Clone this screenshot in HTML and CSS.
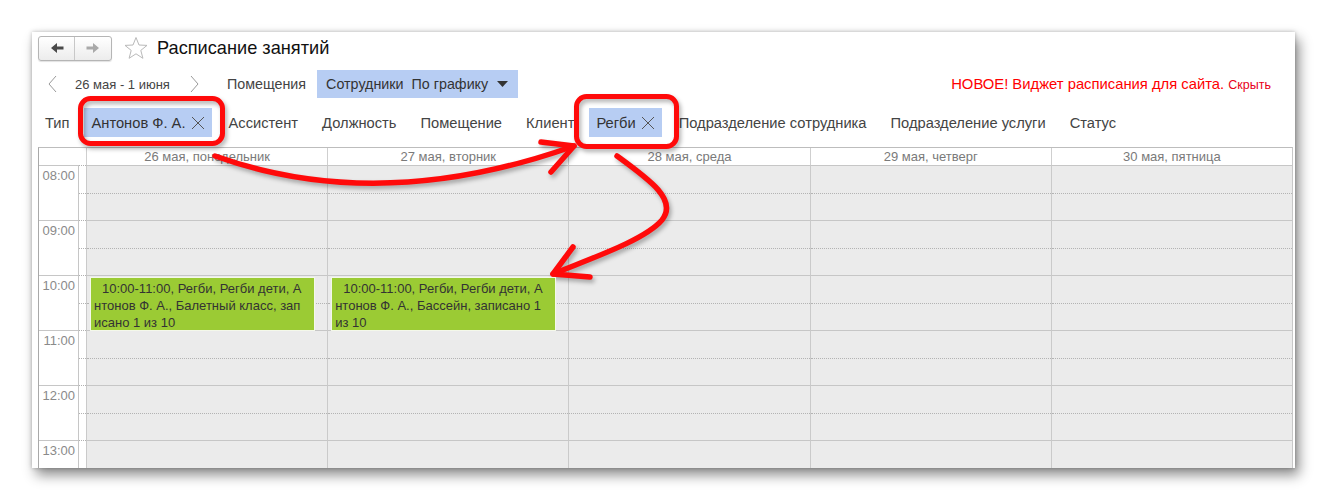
FILE: index.html
```html
<!DOCTYPE html>
<html lang="ru">
<head>
    <meta charset="UTF-8">
    <title>Расписание занятий</title>
    <link rel="stylesheet" href="styles.css">
</head>
<body>
    <div class="window">
        <div class="titlebar">
            <div class="nav">
                <button class="nav-btn back">
                    <svg width="14" height="12" viewBox="0 0 14 12"><path d="M1 6 L7 1 L7 4.5 L13.5 4.5 L13.5 7.5 L7 7.5 L7 11 Z"/></svg>
                </button>
                <button class="nav-btn fwd">
                    <svg width="14" height="12" viewBox="0 0 14 12"><path d="M13 6 L7 1 L7 4.5 L0.5 4.5 L0.5 7.5 L7 7.5 L7 11 Z"/></svg>
                </button>
            </div>
            <svg class="star" width="26" height="24" viewBox="0 0 26 24"><polygon points="13,1.5 16,9 24,9.4 17.8,14.4 19.9,22.3 13,17.8 6.1,22.3 8.2,14.4 2,9.4 10,9"/></svg>
            <h1 class="title">Расписание занятий</h1>
        </div>

        <div class="toolbar">
            <svg class="chev" width="12" height="18" viewBox="0 0 12 18"><path d="M9 1 L2 9 L9 17"/></svg>
            <span class="period">26 мая - 1 июня</span>
            <svg class="chev next" width="12" height="18" viewBox="0 0 12 18"><path d="M3 1 L10 9 L3 17"/></svg>
            <span class="tab">Помещения</span>
            <div class="tab tab-active">
                <span>Сотрудники</span>
                <span>По графику</span>
                <svg class="caret" width="11" height="6" viewBox="0 0 11 6"><path d="M0 0 L11 0 L5.5 6 Z"/></svg>
            </div>
            <div class="notice">НОВОЕ! Виджет расписания для сайта. <a href="#" class="hide-link">Скрыть</a></div>
        </div>

        <div class="filters">
            <span class="filter">Тип</span>
            <span class="chip">Антонов Ф. А.
                <svg width="14" height="14" viewBox="0 0 14 14"><path d="M1 1 L13 13 M13 1 L1 13"/></svg>
            </span>
            <span class="filter">Ассистент</span>
            <span class="filter">Должность</span>
            <span class="filter">Помещение</span>
            <span class="filter">Клиент</span>
            <span class="chip">Регби
                <svg width="14" height="14" viewBox="0 0 14 14"><path d="M1 1 L13 13 M13 1 L1 13"/></svg>
            </span>
            <span class="filter">Подразделение сотрудника</span>
            <span class="filter">Подразделение услуги</span>
            <span class="filter">Статус</span>
        </div>

        <div class="calendar">
            <div class="cal-head">
                <div class="corner"></div>
                <div class="day-title">26 мая, понедельник</div>
                <div class="day-title">27 мая, вторник</div>
                <div class="day-title">28 мая, среда</div>
                <div class="day-title">29 мая, четверг</div>
                <div class="day-title">30 мая, пятница</div>
            </div>
            <div class="cal-body">
                <div class="hour-row">
                    <div class="time">08:00</div><div class="strip"></div>
                    <div class="day"></div><div class="day"></div><div class="day"></div><div class="day"></div><div class="day"></div>
                </div>
                <div class="hour-row">
                    <div class="time">09:00</div><div class="strip"></div>
                    <div class="day"></div><div class="day"></div><div class="day"></div><div class="day"></div><div class="day"></div>
                </div>
                <div class="hour-row">
                    <div class="time">10:00</div><div class="strip"></div>
                    <div class="day">
                        <div class="event">10:00-11:00, Регби, Регби дети, Антонов Ф. А., Балетный класс, записано 1 из 10</div>
                    </div>
                    <div class="day">
                        <div class="event">10:00-11:00, Регби, Регби дети, Антонов Ф. А., Бассейн, записано 1 из 10</div>
                    </div>
                    <div class="day"></div><div class="day"></div><div class="day"></div>
                </div>
                <div class="hour-row">
                    <div class="time">11:00</div><div class="strip"></div>
                    <div class="day"></div><div class="day"></div><div class="day"></div><div class="day"></div><div class="day"></div>
                </div>
                <div class="hour-row">
                    <div class="time">12:00</div><div class="strip"></div>
                    <div class="day"></div><div class="day"></div><div class="day"></div><div class="day"></div><div class="day"></div>
                </div>
                <div class="hour-row">
                    <div class="time">13:00</div><div class="strip"></div>
                    <div class="day"></div><div class="day"></div><div class="day"></div><div class="day"></div><div class="day"></div>
                </div>
            </div>
        </div>
    </div>

    <!-- red annotation marks drawn over the screenshot -->
    <svg class="marks" width="1327" height="501" viewBox="0 0 1327 501">
        <rect x="80.5" y="98.5" width="142" height="45" rx="10"/>
        <rect x="576.5" y="96.5" width="100" height="50" rx="10"/>
        <path d="M215 156 Q380 215 574 146"/>
        <path d="M541 142 L574 146 L551 172"/>
        <path d="M617 156 C650 180 678 200 662 220 C645 240 592 258 553 274"/>
        <path d="M573 247 L553 274 L590 277"/>
    </svg>
</body>
</html>
```

FILE: styles.css
```css
* {
    margin: 0;
    padding: 0;
    box-sizing: border-box;
}

body {
    background: #fff;
    font-family: "Liberation Sans", Arial, sans-serif;
    color: #333;
    position: relative;
    width: 1327px;
    height: 501px;
    overflow: hidden;
}

.window {
    margin: 32px 0 0 32px;
    width: 1263px;
    height: 436px;
    background: #fff;
    box-shadow: 0 0 4px rgba(0, 0, 0, 0.25), 4px 7px 12px rgba(0, 0, 0, 0.45);
    overflow: hidden;
}

/* title bar */
.titlebar {
    display: flex;
    align-items: center;
    height: 29px;
    padding: 3px 6px 0;
}

.nav {
    display: flex;
    height: 25px;
    border: 1px solid #b5b5b5;
    border-radius: 3px;
    background: linear-gradient(#fff, #ececec);
    box-shadow: 0 1px 1px rgba(0, 0, 0, 0.12);
}

.nav-btn {
    width: 36px;
    border: 0;
    background: transparent;
    display: flex;
    align-items: center;
    justify-content: center;
}

.nav-btn.back {
    border-right: 1px solid #c8c8c8;
}

.nav-btn.back svg { fill: #4a4a4a; }
.nav-btn.fwd svg { fill: #a9a9a9; }

.star {
    margin-left: 11px;
    fill: none;
    stroke: #b9b9b9;
    stroke-width: 1;
}

.title {
    margin-left: 8px;
    font-size: 18.2px;
    font-weight: normal;
    color: #111;
}

/* period + tabs */
.toolbar {
    display: flex;
    align-items: center;
    height: 28px;
    margin-top: 9px;
    padding: 0 24px 0 15px;
    font-size: 14.3px;
}

.chev {
    fill: none;
    stroke: #9a9a9a;
    stroke-width: 1;
}

.period {
    margin: 0 16px;
    font-size: 13px;
    color: #444;
}

.chev.next {
    margin-left: 2px;
}

.tab {
    margin-left: 27px;
    color: #444;
}

.tab-active {
    display: flex;
    align-items: center;
    gap: 8px;
    height: 28px;
    margin-left: 11px;
    padding: 0 10px 0 9px;
    background: #b7cdf3;
    color: #333;
}

.caret {
    margin-left: 1px;
    fill: #333;
}

.notice {
    margin-left: auto;
    font-size: 14.8px;
    color: #f00;
}

.hide-link {
    color: #e8001a;
    font-size: 12.5px;
    text-decoration: none;
}

/* filter row */
.filters {
    display: flex;
    align-items: center;
    height: 29px;
    margin-top: 10px;
    padding-left: 1px;
    font-size: 14.7px;
    color: #444;
}

.filter {
    padding: 0 12px;
}

.chip {
    display: flex;
    align-items: center;
    gap: 5px;
    height: 29px;
    margin: 0 5px 0 3px;
    padding: 0 7px 0 7px;
    background: #b7cdf3;
    color: #333;
}

.chip svg {
    stroke: #555;
    stroke-width: 1;
}

/* calendar grid */
.calendar {
    margin: 10px 0 0 6px;
    width: 1255px;
    border-top: 1px solid #bdbdbd;
    border-left: 1px solid #a9a9a9;
    border-right: 1px solid #c8c8c8;
}

.cal-head,
.hour-row {
    display: grid;
    grid-template-columns: 40px 7px repeat(5, 1fr);
}

.cal-head {
    height: 17px;
}

.corner {
    grid-column: span 2;
}

.day-title {
    border-left: 1px solid #cfcfcf;
    text-align: center;
    font-size: 13px;
    line-height: 17px;
    color: #7a7a7a;
}

.cal-body {
    height: 303px;
    overflow: hidden;
}

.hour-row {
    height: 55px;
}

.time {
    border-top: 1px solid #c6c6c6;
    border-right: 1px solid #c6c6c6;
    padding: 2px 3px 0 0;
    text-align: right;
    font-size: 13px;
    color: #8a8a8a;
}

.strip,
.day {
    position: relative;
}

.strip {
    border-top: 1px dotted #b0b0b0;
}

.day {
    border-top: 1px solid #c6c6c6;
    border-left: 1px solid #cacaca;
    background: #ebebeb;
}

.strip::after,
.day::after {
    content: "";
    position: absolute;
    left: 0;
    right: 0;
    top: 27px;
    border-top: 1px dotted #b3b3b3;
}

.event {
    position: absolute;
    z-index: 1;
    top: 1px;
    left: 3px;
    right: 12px;
    height: 54px;
    padding: 2px 7px 2px 3px;
    background: #9bcb34;
    border: 1px solid #f4f8ea;
    font-size: 13px;
    line-height: 17px;
    color: #333;
    text-indent: 8px;
    word-break: break-all;
}

/* annotation overlay */
.marks {
    position: absolute;
    top: 0;
    left: 0;
    pointer-events: none;
    fill: none;
    stroke: #ff0a0a;
    stroke-width: 5.5;
    stroke-linecap: round;
    stroke-linejoin: round;
    filter: drop-shadow(2px 3px 2px rgba(0, 0, 0, 0.3));
}

.marks rect {
    stroke-width: 5;
}
```
